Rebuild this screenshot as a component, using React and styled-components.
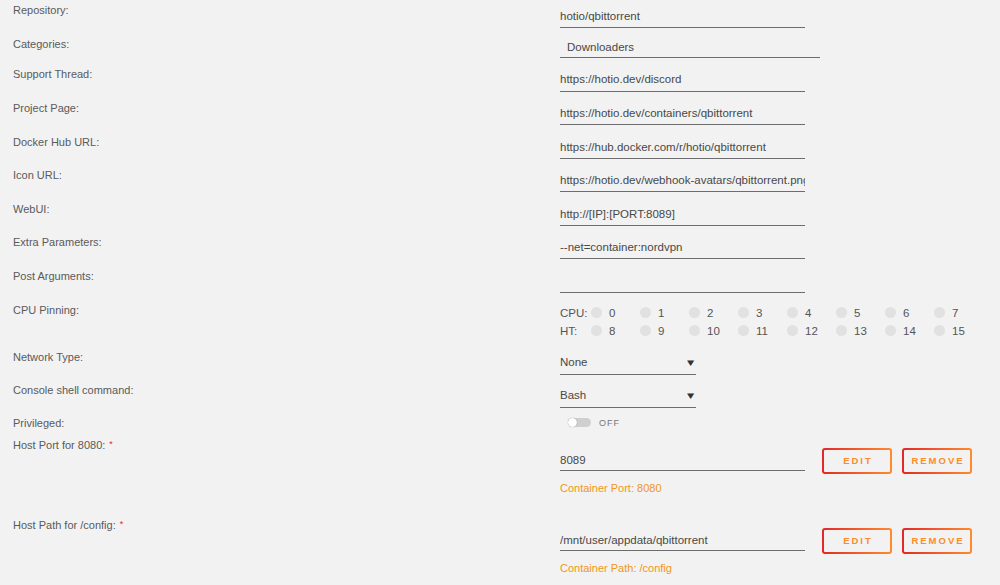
import React from 'react'
import styled, { createGlobalStyle } from 'styled-components'

const GlobalStyle = createGlobalStyle`
  html, body {
    margin: 0;
    padding: 0;
    background: #f2f2f2;
  }
  body {
    font-family: "Liberation Sans", Arial, sans-serif;
    font-size: 11px;
    color: #555;
  }
`

const Form = styled.div`
  padding-left: 13px;
  width: 987px;
  height: 585px;
  overflow: hidden;
`

const Row = styled.div`
  display: flex;
  align-items: flex-start;
  height: ${p => p.$h}px;
`

const Label = styled.div`
  width: 547px;
  flex: none;
  padding-top: 3px;
  line-height: 14px;
  color: #5a5a5a;
`

const Required = styled.span`
  color: #e22828;
  font-size: 9px;
  vertical-align: top;
  margin-left: 4px;
  position: relative;
  top: -1px;
`

const Value = styled.div`
  padding-top: ${p => p.$top ?? 8}px;
  display: flex;
  flex-direction: column;
`

// icon url is clipped by the field width, same as the original input
const Field = styled.div`
  width: ${p => p.$w ?? 245}px;
  box-sizing: border-box;
  padding: 0 0 ${p => p.$pb ?? 4}px ${p => p.$indent ?? 0}px;
  font-size: 11.5px;
  line-height: 14px;
  border-bottom: 1px solid #6d6d6d;
  color: #484848;
  white-space: nowrap;
  overflow: hidden;
`

const Select = styled(Field)`
  display: flex;
  justify-content: space-between;
  align-items: center;
  &::after {
    content: '▾';
    font-size: 11px;
    color: #333;
    transform: scaleX(1.3);
    margin-right: 2px;
  }
`

const Pinning = styled.div`
  display: grid;
  grid-template-columns: 31px repeat(8, 49px);
  row-gap: 4px;
  line-height: 14px;
  font-size: 11.5px;
  color: #555;
`

const Cpu = styled.label`
  display: flex;
  align-items: center;
  gap: 7px;
`

const Dot = styled.span`
  width: 11px;
  height: 11px;
  border-radius: 50%;
  background: #e1e1e1;
  display: inline-block;
`

const Switch = styled.div`
  display: flex;
  align-items: center;
  gap: 8px;
  margin-left: 8px;
`

const Track = styled.span`
  width: 23px;
  height: 9px;
  border-radius: 5px;
  background: #cfcfcf;
  display: flex;
  align-items: center;
  &::before {
    content: '';
    width: 9px;
    height: 9px;
    border-radius: 50%;
    background: #fff;
    box-shadow: 0 0 1px rgba(0, 0, 0, 0.45);
  }
`

const SwitchText = styled.span`
  font-size: 9px;
  letter-spacing: 1px;
  color: #777;
`

const PortLine = styled.div`
  display: flex;
  align-items: flex-end;
`

const Button = styled.button`
  width: ${p => p.$w}px;
  height: 26px;
  margin-left: ${p => p.$ml}px;
  border: 2px solid transparent;
  border-radius: 3px;
  background:
    linear-gradient(#f2f2f2, #f2f2f2) padding-box,
    linear-gradient(90deg, #e22828 0%, #ff8c2f 100%) border-box;
  color: #ff8a2a;
  font-family: "Liberation Sans", Arial, sans-serif;
  font-size: 9.5px;
  font-weight: bold;
  letter-spacing: 2px;
  text-transform: uppercase;
  padding: 0 0 0 2px;
  margin-bottom: -3px;
`

const Hint = styled.div`
  color: #f0961b;
  font-size: 11px;
  margin-top: 10px;
  line-height: 14px;
`

function TextRow ({ label, value, h = 33.6, top, w, indent, pb }) {
  return (
    <Row $h={h}>
      <Label>{label}</Label>
      <Value $top={top}>
        <Field $w={w} $indent={indent} $pb={pb}>{value || '\u00a0'}</Field>
      </Value>
    </Row>
  )
}

function SelectRow ({ label, value }) {
  return (
    <Row $h={33}>
      <Label>{label}</Label>
      <Value $top={8}>
        <Select $w={136} $pb={5}>{value}</Select>
      </Value>
    </Row>
  )
}

function MappingRow ({ label, value, hint, h }) {
  return (
    <Row $h={h}>
      <Label>{label}<Required>*</Required></Label>
      <Value $top={13}>
        <PortLine>
          <Field $pb={3}>{value}</Field>
          <Button $w={70} $ml={17}>Edit</Button>
          <Button $w={70} $ml={10}>Remove</Button>
        </PortLine>
        <Hint>{hint}</Hint>
      </Value>
    </Row>
  )
}

const cpus = [0, 1, 2, 3, 4, 5, 6, 7]

export default function App () {
  return (
    <>
      <GlobalStyle/>
      <Form>
        <TextRow label="Repository:" value="hotio/qbittorrent" h={34} top={9}/>
        <TextRow label="Categories:" value="Downloaders" h={30} top={6} w={260} indent={7} pb={3}/>
        <TextRow label="Support Thread:" value="https://hotio.dev/discord" h={34} pb={5}/>
        <TextRow label="Project Page:" value="https://hotio.dev/containers/qbittorrent"/>
        <TextRow label="Docker Hub URL:" value="https://hub.docker.com/r/hotio/qbittorrent"/>
        <TextRow label="Icon URL:" value="https://hotio.dev/webhook-avatars/qbittorrent.png"/>
        <TextRow label="WebUI:" value="http://[IP]:[PORT:8089]"/>
        <TextRow label="Extra Parameters:" value="--net=container:nordvpn"/>
        <TextRow label="Post Arguments:" value=""/>
        <Row $h={47}>
          <Label>CPU Pinning:</Label>
          <Value $top={6}>
            <Pinning>
              <span>CPU:</span>
              {cpus.map(n => <Cpu key={n}><Dot/>{n}</Cpu>)}
              <span>HT:</span>
              {cpus.map(n => <Cpu key={n + 8}><Dot/>{n + 8}</Cpu>)}
            </Pinning>
          </Value>
        </Row>
        <SelectRow label="Network Type:" value="None"/>
        <SelectRow label="Console shell command:" value="Bash"/>
        <Row $h={22}>
          <Label>Privileged:</Label>
          <Value $top={5}>
            <Switch><Track/><SwitchText>OFF</SwitchText></Switch>
          </Value>
        </Row>
        <MappingRow label="Host Port for 8080:" value="8089" hint="Container Port: 8080" h={80}/>
        <MappingRow label="Host Path for /config:" value="/mnt/user/appdata/qbittorrent" hint="Container Path: /config" h={70}/>
      </Form>
    </>
  )
}
